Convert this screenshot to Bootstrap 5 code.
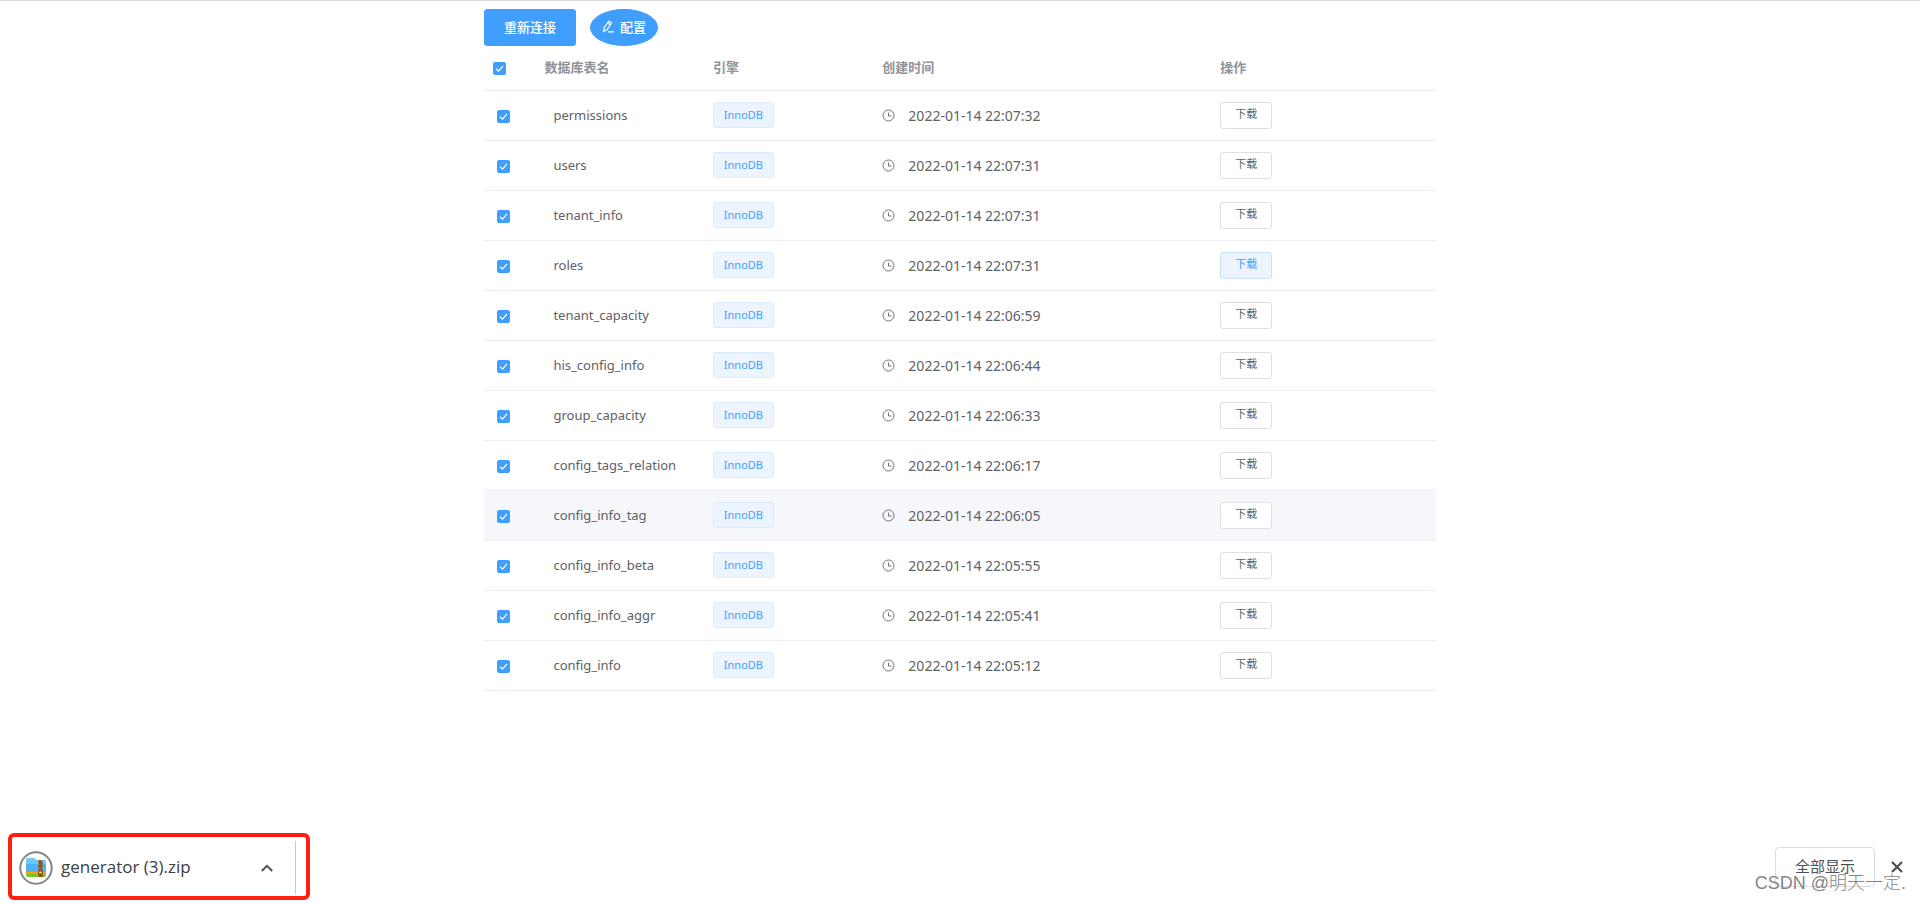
<!DOCTYPE html>
<html lang="zh-CN">
<head>
<meta charset="utf-8">
<meta name="viewport" content="width=device-width, initial-scale=1">
<title>数据库表</title>
<link href="https://cdn.jsdelivr.net/npm/bootstrap@5.3.0/dist/css/bootstrap.min.css" rel="stylesheet">
<style>
  :root { --accent: #409eff; --line: #ebeef5; --ink: #606266; }
  body { font-family: "Noto Sans", "Noto Sans CJK SC", sans-serif; font-size: 13px; color: var(--ink); border-top: 1px solid #d9d9d9; background: #fff; }
  .page-main { max-width: 952px; padding-top: 8px; }
  .toolbar { gap: 14px; }
  .btn-accent { --bs-btn-color: #fff; --bs-btn-bg: var(--accent); --bs-btn-border-color: var(--accent); --bs-btn-hover-color: #fff; --bs-btn-hover-bg: #66b1ff; --bs-btn-hover-border-color: #66b1ff; --bs-btn-font-size: 13px; --bs-btn-border-radius: 3px; --bs-btn-font-weight: 500; height: 37px; padding: 0 19px 2px; line-height: 20px; }
  .btn-oval { border-radius: 50%; padding: 0 11px 2px; gap: 5px; }
  .db-table { table-layout: fixed; --bs-table-bg: transparent; --bs-table-color: var(--ink); border-color: var(--line); }
  .db-table th, .db-table td { padding: 0 10px; height: 50px; vertical-align: middle; border-bottom: 1px solid var(--line); }
  .db-table th { height: 44px; font-weight: 700; color: #909399; }
  .db-table th:not(:first-child), .db-table td:not(.tname) { padding-left: 9px; }
  .db-table td.pick { padding-left: 13px; }
  .db-table td.tname { padding-left: 18px; padding-top: 2px; }
  .db-table .stamp { font-size: 14px; gap: 13px; }
  .db-table tr.current td { background: #f5f7fa; }
  .col-pick { width: 5.4%; } .col-name { width: 17.7%; } .col-engine { width: 17.8%; } .col-time { width: 35.5%; }
  .tick.form-check-input { display: block; width: 13px; height: 13px; margin: 2px 0 0; border-radius: 2px; }
  th .tick.form-check-input { margin-left: -1px; }
  .tick.form-check-input:checked { background-color: var(--accent); border-color: var(--accent); background-size: 13px 13px; background-image: url("data:image/svg+xml,%3Csvg xmlns='http://www.w3.org/2000/svg' viewBox='0 0 13 13'%3E%3Cpath d='M3 6.8 5.5 9.2 10 3.9' fill='none' stroke='white' stroke-width='1.2'/%3E%3C/svg%3E"); }
  .engine-tag { display: block; width: 61px; height: 26px; line-height: 24px; font-size: 11px; font-weight: 400; padding: 0; color: var(--accent); background: #ecf5ff; border: 1px solid #d9ecff; border-radius: 3px; }
  .btn-get { --bs-btn-color: var(--ink); --bs-btn-border-color: #dcdfe6; --bs-btn-bg: #fff; --bs-btn-hover-color: var(--accent); --bs-btn-hover-bg: #ecf5ff; --bs-btn-hover-border-color: #c6e2ff; --bs-btn-active-color: var(--accent); --bs-btn-active-bg: #ecf5ff; --bs-btn-active-border-color: #c6e2ff; --bs-btn-border-radius: 3px; display: block; width: 52px; height: 27px; padding: 0 0 2px; font-size: 11px; line-height: 22px; font-weight: 400; }
  .shelf { padding: 0 17px 2px 8px; color: #3c4043; }
  .shelf-item { width: 302px; height: 67px; border: 4px solid #ff1f10; border-radius: 6px; padding: 4px 10px 2px 7px; }
  .shelf-inner { border-right: 1px solid #c8cacd; }
  .file-name { font-family: "Open Sans", sans-serif; font-size: 17px; line-height: 24px; padding-bottom: 2px; color: #3c4043; }
  .btn-plain { border: 0; background: none; padding: 0; line-height: 1; color: #4d5156; }
  .btn-more { margin-right: 22px; }
  .btn-all { --bs-btn-color: #4d5156; --bs-btn-border-color: #dadce0; --bs-btn-border-radius: 4px; --bs-btn-font-size: 15px; width: 100px; height: 40px; padding: 0; }
  .watermark { right: 14px; bottom: 5px; font: 300 18px/27px "Liberation Sans", "Noto Sans CJK SC", sans-serif; color: #858585; pointer-events: none; }
</style>
</head>
<body class="d-flex flex-column min-vh-100 position-relative">
<main class="page-main container-fluid px-0 flex-grow-1">
  <div class="toolbar d-flex">
    <button type="button" class="btn btn-accent">重新连接</button>
    <button type="button" class="btn btn-accent btn-oval d-flex align-items-center">
      <svg width="13" height="13" viewBox="0 0 13 13" fill="none" stroke="currentColor" stroke-width="1.2" aria-hidden="true"><path d="M2.200 7.600 6.800 1.200 9.600 3 5.200 9.600 1.700 11.500zM5.500 3 8.300 4.800M6 11.800H12"/></svg>配置
    </button>
  </div>
  <table class="db-table table mb-0">
    <colgroup><col class="col-pick"><col class="col-name"><col class="col-engine"><col class="col-time"><col></colgroup>
    <thead>
      <tr><th><input class="tick form-check-input" type="checkbox" checked aria-label="全选"></th><th>数据库表名</th><th>引擎</th><th>创建时间</th><th>操作</th></tr>
    </thead>
    <tbody id="rows"></tbody>
  </table>
</main>
<footer class="shelf d-flex align-items-center justify-content-between">
  <div class="shelf-item">
    <div class="shelf-inner d-flex align-items-center h-100">
      <svg width="34" height="34" viewBox="0 0 34 34" aria-hidden="true">
        <circle cx="17" cy="17" r="15.7" fill="#fff" stroke="#80868b" stroke-width="2"/>
        <path d="M7 20h20v4a2 2 0 0 1-2 2H9a2 2 0 0 1-2-2z" fill="#7cc520"/>
        <path d="M7 18h20v5H7z" fill="#ff9d1c"/>
        <path d="M7 9a2 2 0 0 1 2-2h6l2 2h8a2 2 0 0 1 2 2v10H7z" fill="#4fb2f2"/>
        <path d="M7 9a2 2 0 0 1 2-2h6l2 2h8a2 2 0 0 1 2 2v2H7z" fill="#6ac8fa"/>
        <path d="M19.500 9h4v17h-4z" fill="#a05a22"/>
        <path d="M19.500 12h4M19.500 15h4M19.500 25h4" stroke="#7d431a" stroke-width="1"/>
        <path d="M19.500 20h4v3h-4z" fill="#ffc66a" stroke="#7b3c10"/>
      </svg>
      <a href="#" class="file-name text-decoration-none ms-2">generator (3).zip</a>
      <button type="button" class="btn-plain btn-more ms-auto d-flex" aria-label="更多">
        <svg width="12" height="8" viewBox="0 0 12 8" fill="none" stroke="currentColor" stroke-width="2"><path d="M.8 7 6 1.800 11.200 7"/></svg>
      </button>
    </div>
  </div>
  <div class="d-flex align-items-center gap-3">
    <button type="button" class="btn btn-all">全部显示</button>
    <button type="button" class="btn-plain d-flex" aria-label="关闭">
      <svg width="12" height="12" viewBox="0 0 12 12" fill="none" stroke="currentColor" stroke-width="2.200"><path d="M1 1 11 11M11 1 1 11"/></svg>
    </button>
  </div>
</footer>
<div class="watermark position-absolute">CSDN @明天一定.</div>
<script src="https://cdn.jsdelivr.net/npm/bootstrap@5.3.0/dist/js/bootstrap.bundle.min.js"></script>
<script>
  const tables = [
    ["permissions", "22:07:32"], ["users", "22:07:31"], ["tenant_info", "22:07:31"], ["roles", "22:07:31"],
    ["tenant_capacity", "22:06:59"], ["his_config_info", "22:06:44"], ["group_capacity", "22:06:33"],
    ["config_tags_relation", "22:06:17"], ["config_info_tag", "22:06:05"], ["config_info_beta", "22:05:55"],
    ["config_info_aggr", "22:05:41"], ["config_info", "22:05:12"]
  ];
  document.getElementById("rows").innerHTML = tables.map(([name, time]) => `
    <tr class="${name === "config_info_tag" ? "current" : ""}">
      <td class="pick"><input class="tick form-check-input" type="checkbox" checked aria-label="${name}"></td>
      <td class="tname text-nowrap">${name}</td>
      <td><span class="engine-tag badge">InnoDB</span></td>
      <td><div class="stamp d-flex align-items-center"><svg width="13" height="13" viewBox="0 0 13 13" fill="none" stroke="currentColor" stroke-width=".9" aria-hidden="true"><circle cx="6.500" cy="6.500" r="5.500"/><path d="M6.500 3.500v3.500h3"/></svg>2022-01-14 ${time}</div></td>
      <td><button type="button" class="btn btn-get ${name === "roles" ? "active" : ""}">下载</button></td>
    </tr>`).join("");
</script>
</body>
</html>
